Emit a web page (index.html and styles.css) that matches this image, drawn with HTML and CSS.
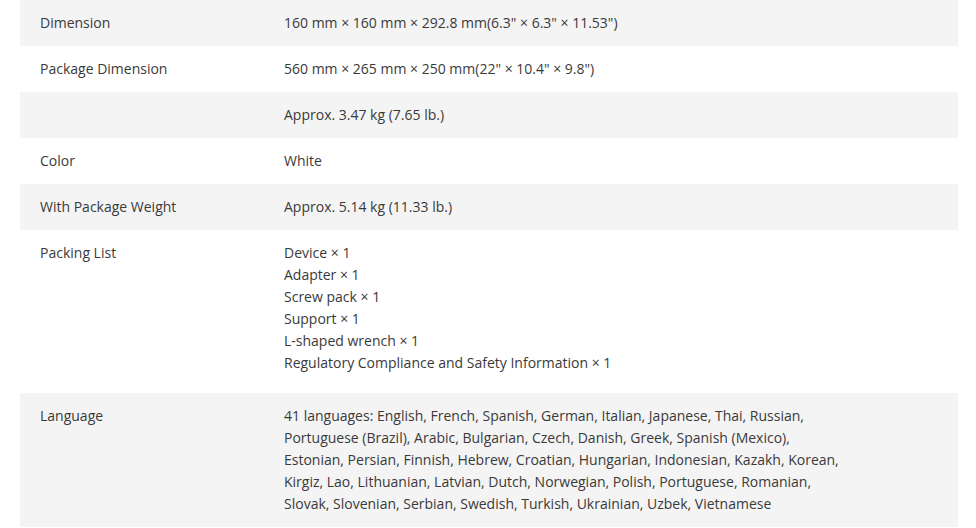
FILE: index.html
```html
<!DOCTYPE html>
<html>
<head>
<meta charset="utf-8">
<link rel="stylesheet" href="styles.css">
</head>
<body>
<div class="specs">
  <div class="row grey"><div class="label">Dimension</div><div class="value">160 mm × 160 mm × 292.8 mm(6.3" × 6.3" × 11.53")</div></div>
  <div class="row"><div class="label">Package Dimension</div><div class="value">560 mm × 265 mm × 250 mm(22" × 10.4" × 9.8")</div></div>
  <div class="row grey"><div class="label"></div><div class="value">Approx. 3.47 kg (7.65 lb.)</div></div>
  <div class="row"><div class="label">Color</div><div class="value">White</div></div>
  <div class="row grey"><div class="label">With Package Weight</div><div class="value">Approx. 5.14 kg (11.33 lb.)</div></div>
  <div class="row"><div class="label">Packing List</div><div class="value list">Device × 1<br>Adapter × 1<br>Screw pack × 1<br>Support × 1<br>L-shaped wrench × 1<br>Regulatory Compliance and Safety Information × 1</div></div>
  <div class="row grey"><div class="label">Language</div><div class="value">41 languages: English, French, Spanish, German, Italian, Japanese, Thai, Russian,<br>Portuguese (Brazil), Arabic, Bulgarian, Czech, Danish, Greek, Spanish (Mexico),<br>Estonian, Persian, Finnish, Hebrew, Croatian, Hungarian, Indonesian, Kazakh, Korean,<br>Kirgiz, Lao, Lithuanian, Latvian, Dutch, Norwegian, Polish, Portuguese, Romanian,<br>Slovak, Slovenian, Serbian, Swedish, Turkish, Ukrainian, Uzbek, Vietnamese</div></div>
</div>
</body>
</html>
```
FILE: styles.css
```css
html, body {
  margin: 0;
  padding: 0;
  background: #fff;
}
body {
  font-family: "Open Sans", "Liberation Sans", sans-serif;
  font-size: 14px;
  line-height: 22px;
  color: #3a3a3a;
}
.specs {
  margin: 0 18px 0 20px;
  display: flex;
  flex-direction: column;
}
.row {
  display: grid;
  grid-template-columns: 244px 1fr;
}
.row.grey {
  background: #f4f4f4;
}
.label, .value {
  padding: 12px 20px;
}
.value {
  padding-right: 20px;
}
.value.list {
  padding-bottom: 19px;
}
```
